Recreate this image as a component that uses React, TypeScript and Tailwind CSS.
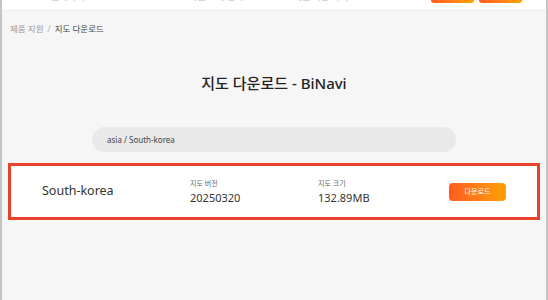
const font = { fontFamily: '"Noto Sans", "Noto Sans CJK KR", sans-serif' };

export default function App() {
  return (
    <div
      className="h-[300px] w-[548px] overflow-hidden border-x-2 border-[#c4c4c4] bg-[#f6f6f6]"
      style={font}
    >
      {/* header, scrolled so only its lower edge shows */}
      <header className="relative h-[11px] overflow-hidden border-b border-[#ececec] bg-white">
        <div className="absolute -top-[9px] left-0 flex h-[12px] w-full items-center text-[9px] text-[#bbb]">
          <span className="ml-[20px]">BiNavi 홈페이지</span>
          <span className="ml-[105px]">제품 소개 안내</span>
          <span className="ml-[50px]">제품 지원 서비스</span>
          <div className="ml-auto mr-[24px] flex gap-[5px]">
            <div className="h-[12px] w-[43px] rounded-[3px] bg-gradient-to-r from-[#ff5a1f] to-[#ffa000]" />
            <div className="h-[12px] w-[43px] rounded-[3px] bg-gradient-to-r from-[#ff5a1f] to-[#ffa000]" />
          </div>
        </div>
      </header>

      <nav className="mt-[12px] flex items-center gap-[4px] pl-[8px] text-[8.5px]">
        <span className="text-[#999]">제품 지원</span>
        <span className="text-[#aaa]">/</span>
        <span className="text-[#444]">지도 다운로드</span>
      </nav>

      <h1 className="mt-[36px] text-center text-[15px] font-medium text-[#222]">
        지도 다운로드 - BiNavi
      </h1>

      <div className="mx-auto mt-[33px] flex h-[25px] w-[364px] items-center rounded-full bg-[#e9e9e9] pl-[15px] text-[8px] text-[#444]">
        asia / South-korea
      </div>

      <div className="mx-[6px] mt-[11px] flex h-[57px] items-center border-[3px] border-[#e8412c] bg-white">
        <div className="w-[179px] pl-[31px] text-[12.5px] text-[#333]">South-korea</div>
        <div className="w-[128px]">
          <div className="text-[7px] text-[#666]">지도 버전</div>
          <div className="mt-[1px] text-[11px] leading-[14px] text-[#333]">20250320</div>
        </div>
        <div className="w-[131px]">
          <div className="text-[7px] text-[#666]">지도 크기</div>
          <div className="mt-[1px] text-[11px] leading-[14px] text-[#333]">132.89MB</div>
        </div>
        <button className="flex h-[18px] w-[57px] items-center justify-center rounded-[4px] bg-gradient-to-r from-[#ff5a1f] to-[#ffa000] text-[7px] text-white">
          다운로드
        </button>
      </div>
    </div>
  );
}
